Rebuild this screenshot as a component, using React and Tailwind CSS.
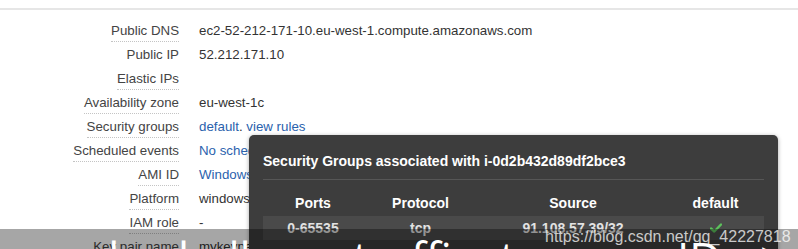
import React from "react";

const rows = [
  { label: "Public DNS", value: "ec2-52-212-171-10.eu-west-1.compute.amazonaws.com", dots: true },
  { label: "Public IP", value: "52.212.171.10", dots: false },
  { label: "Elastic IPs", value: "", dots: true },
  { label: "Availability zone", value: "eu-west-1c", dots: true },
  { label: "Security groups", value: "sg", dots: true },
  { label: "Scheduled events", value: "No scheduled events", link: true, dots: true },
  { label: "AMI ID", value: "Windows_Server-2012-R2_RTM-English-64Bit-Base", link: true, dots: true },
  { label: "Platform", value: "windows", dots: true },
  { label: "IAM role", value: "-", dots: true },
  { label: "Key pair name", value: "mykeypair", dots: true },
];

const subtitle = [
  { t: "real", x: 41 },
  { t: "rule", x: 133 },
  { t: "allows", x: 204 },
  { t: "traffic", x: 353 },
  { t: "to", x: 500 },
  { t: "your", x: 560 },
  { t: "ID", x: 677 },
  { t: ">", x: 760 },
];

export default function App() {
  return (
    <div className="relative w-[798px] h-[249px] overflow-hidden bg-white font-['Liberation_Sans',Arial,sans-serif] text-[13.3px]">
      <div className="h-[8px]" />
      <div className="h-[2px] bg-[#e6e6e6]" />
      <div className="pt-[9px] flex flex-col">
        {rows.map((r) => (
          <div key={r.label} className="h-[24px] flex items-center">
            <div className="w-[179px] text-right shrink-0">
              <span
                className={
                  "inline-block leading-[20px] text-[#444] border-b border-dotted " +
                  (r.dots ? "border-[#c4c4c4]" : "border-transparent")
                }
              >
                {r.label}
              </span>
            </div>
            <div className="pl-[20px] whitespace-nowrap leading-[20px] pb-px">
              {r.value === "sg" ? (
                <span>
                  <span className="text-[#2a62ad]">default</span>
                  <span className="text-[#333]">. </span>
                  <span className="text-[#2a62ad]">view rules</span>
                </span>
              ) : (
                <span className={r.link ? "text-[#2a62ad]" : "text-[#333]"}>{r.value}</span>
              )}
            </div>
          </div>
        ))}
      </div>

      {/* Popover */}
      <div className="absolute left-[249px] top-[135px] w-[529px] h-[140px] bg-[#3d3d3d] rounded-[5px] shadow-[0_1px_4px_rgba(0,0,0,0.35)] px-[14px] pt-[16px]">
        <div className="leading-[20px] text-[14px] font-bold text-white whitespace-nowrap pb-[8px] border-b border-[#565656]">
          Security Groups associated with i-0d2b432d89df2bce3
        </div>
        <div className="flex text-[14px] font-bold text-white leading-[20px] pt-[13px] pb-[3px]">
          <div className="w-[100px] text-center">Ports</div>
          <div className="w-[115px] text-center">Protocol</div>
          <div className="w-[190px] text-center">Source</div>
          <div className="w-[95px] text-center">default</div>
        </div>
        <div className="flex items-center h-[24px] bg-[#4a4a4a] text-[14px] font-bold text-[#e2e2e2] leading-[20px]">
          <div className="w-[100px] text-center">0-65535</div>
          <div className="w-[115px] text-center">tcp</div>
          <div className="w-[190px] text-center">91.108.57.39/32</div>
          <div className="w-[95px] flex justify-center">
            <svg width="12" height="10" viewBox="0 0 12 10">
              <path d="M1 5.5 L4.3 8.5 L11 1.5" stroke="#5cc25c" strokeWidth="2.4" fill="none" strokeLinecap="round" strokeLinejoin="round" />
            </svg>
          </div>
        </div>
      </div>

      {/* Video subtitle band */}
      <div className="absolute left-0 right-0 top-[229px] bottom-0 bg-black/35" />
      <div className="absolute left-[545px] top-[227px] text-[16px] leading-[20px] text-white/75 whitespace-nowrap font-['Liberation_Sans',Arial,sans-serif]">
        https://blog.csdn.net/qq_42227818
      </div>
      {subtitle.map((w) => (
        <span
          key={w.t}
          className="absolute top-[235px] text-[44px] leading-none text-white font-['Open_Sans',sans-serif] whitespace-nowrap"
          style={{ left: w.x }}
        >
          {w.t}
        </span>
      ))}
    </div>
  );
}
